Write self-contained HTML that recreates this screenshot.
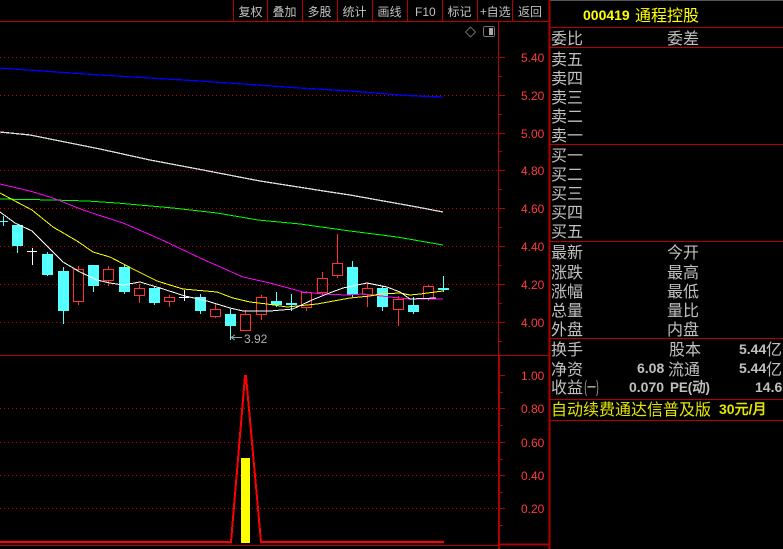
<!DOCTYPE html>
<html><head><meta charset="utf-8"><style>
html,body{margin:0;padding:0;background:#000;width:783px;height:549px;overflow:hidden}
svg{display:block}
text{font-family:"WenQuanYi Zen Hei","Noto Sans CJK SC","Liberation Sans",sans-serif;font-size:16px;fill:#c0c0c0}
.t{font-size:12px;fill:#c0c0c0}
.a{font-family:"Liberation Sans",sans-serif;font-size:12px;fill:#ff3c3c}
.b{font-family:"Liberation Sans","WenQuanYi Zen Hei",sans-serif;font-weight:bold;font-size:14px}
.y{fill:#e6e600}
</style></head><body>
<svg width="783" height="549" viewBox="0 0 783 549" xmlns="http://www.w3.org/2000/svg">
<rect width="783" height="549" fill="#000"/>
<rect x="549" y="0" width="234" height="1" fill="#555"/>
<g shape-rendering="crispEdges" fill="none">
<!-- grid -->
<path d="M0 57.5H498M0 95.5H498M0 133.5H498M0 170.5H498M0 208.5H498M0 246.5H498M0 284.5H498M0 322.5H498M0 408.5H498M0 442.5H498M0 475.5H498M0 508.5H498" stroke="#c80000" stroke-dasharray="1 3"/>
<!-- frame -->
<path d="M0 21.5H549M0 355.5H549M0 545.5H498M549 27.5H783M549 47.5H783M549 144.5H783M549 241.5H783M549 338.5H783M549 399.5H783M549 420.5H783M233.5 0V21M267.5 0V21M302.5 0V21M337.5 0V21M372.5 0V21M407.5 0V21M442.5 0V21M477.5 0V21M512.5 0V21M498.5 21V355" stroke="#b80000"/>
<path d="M499 355V549M498 544.5H549M549.5 0V549" stroke="#ae0000" stroke-width="2"/>
<path d="M499 57.5h6M499 76.5h3M499 95.5h6M499 114.5h3M499 133.5h6M499 151.5h3M499 170.5h6M499 189.5h3M499 208.5h6M499 227.5h3M499 246.5h6M499 265.5h3M499 284.5h6M499 303.5h3M499 322.5h6M499 341.5h3M500 375.5h5M500 392.5h3M500 408.5h5M500 425.5h3M500 442.5h5M500 459.5h3M500 475.5h5M500 492.5h3M500 508.5h5M500 525.5h3" stroke="#b80000"/>
<!-- cyan candles -->
<path d="M17.5 246V253M47.5 252V276M63.5 267V324M93.5 265V292M124.5 264V294M154.5 287V305M200.5 294V314M230.5 309V340M276.5 292V307M291.5 294V311M352.5 261V297M382.5 286V311M413.5 297V314M443.5 276V292M0 221.5H8M3.5 216V226" stroke="#54ffff"/>
<path d="M12 225h11v21h-11zM42 254h11v21h-11zM58 271h11v40h-11zM88 265h11v21h-11zM119 267h11v25h-11zM149 288h11v15h-11zM195 297h11v14h-11zM225 314h11v12h-11zM271 301h11v4h-11zM286 303h11v2h-11zM347 267h11v28h-11zM377 288h11v19h-11zM408 305h11v7h-11zM438 288h11v2h-11z" fill="#54ffff"/>
<!-- white crosses -->
<path d="M27 251.5H37M32.5 248V265M179 297.5H189M184.5 290V301" stroke="#fff"/>
<!-- red candles -->
<path d="M78.5 266V269M78.5 302V305M108.5 266V269M108.5 281V286M139.5 284V288M139.5 296V303M169.5 295V297M169.5 302V307M215.5 304V309M215.5 317V318M245.5 310V314M261.5 295V297M261.5 315V320M306.5 291V292M306.5 308V311M322.5 272V278M322.5 293V295M337.5 234V263M337.5 276V278M367.5 283V288M367.5 295V307M398.5 296V299M398.5 310V326M428.5 285V286M428.5 299V301" stroke="#ff3232"/>
<path d="M73.5 269.5h10v32h-10zM103.5 269.5h10v11h-10zM134.5 288.5h10v7h-10zM164.5 297.5h10v4h-10zM210.5 309.5h10v7h-10zM240.5 314.5h10v16h-10zM256.5 297.5h10v17h-10zM301.5 292.5h10v15h-10zM317.5 278.5h10v14h-10zM332.5 263.5h10v12h-10zM362.5 288.5h10v6h-10zM393.5 299.5h10v10h-10zM423.5 286.5h10v12h-10z" stroke="#ff3232" stroke-width="1"/>
<!-- MAs -->
<polyline stroke="#0000ff" stroke-width="1.3" points="0,68 100,75 200,81 300,88 350,91 400,95 417,96 443,97"/>
<polyline stroke="#dcdcdc" stroke-width="1.3" points="0,132 30,135 60,141 100,149 150,160 203,170 260,181 330,192 350,195 417,207 443,212"/>
<polyline stroke="#00ff00" points="0,199 53,200 87,201 117,203 173,208 217,213 258,220 300,224 350,231 397,237 443,245"/>
<polyline stroke="#ff00ff" points="0,184 30,191 53,198 83,210 123,223 160,239 200,258 243,277 270,283 303,292 323,294 347,295 363,294 390,297 410,299 443,299"/>
<polyline stroke="#ffff00" points="0,193 13,200 32,210 53,227 77,241 93,252 110,257 133,269 157,281 183,289 217,292 233,298 250,302 267,304 287,307 317,304 350,298 370,296 380,294 400,293 410,295 420,294 443,291"/>
<polyline stroke="#ffffff" points="0,212 15,223 32,231 43,242 63,262 80,272 97,280 110,283 123,285 140,282 160,288 185,296 207,301 230,308 243,311 270,311 293,309 312,300 327,294 343,288 367,283 387,287 400,292 410,299 436,298"/>
<!-- lower -->
<rect x="241" y="458" width="9" height="85" fill="#ffff00" stroke="none"/>
<polyline stroke="#ff0000" stroke-width="2" points="0,542 231,542 245,376 246,376 261,542 444,542"/>
<!-- low marker -->
<path d="M231 337.5H242M231 337.5L235 335M231 337.5L235 340" stroke="#a0a0a0"/>
<!-- icons -->
<path d="M470.5 27L475.5 32L470.5 37L465.5 32Z" stroke="#666"/>
<rect x="483.5" y="26.5" width="11" height="10" rx="2" stroke="#777"/>
<rect x="489" y="28" width="4" height="7" fill="#aaa"/>
</g>
<text class="a" x="244" y="343" style="fill:#b0b0b0">3.92</text>
<!-- toolbar -->
<text class="t" x="238.5" y="16">复权</text><text class="t" x="272.5" y="16">叠加</text><text class="t" x="307.5" y="16">多股</text><text class="t" x="342.5" y="16">统计</text><text class="t" x="377.5" y="16">画线</text>
<text class="t" x="415" y="16" style="font-family:'Liberation Sans',sans-serif">F10</text>
<text class="t" x="447.5" y="16">标记</text><text class="t" x="480" y="16">+自选</text><text class="t" x="518" y="16">返回</text>
<!-- axis -->
<text class="a" x="521" y="62">5.40</text><text class="a" x="521" y="100">5.20</text><text class="a" x="521" y="138">5.00</text><text class="a" x="521" y="175">4.80</text><text class="a" x="521" y="213">4.60</text><text class="a" x="521" y="251">4.40</text><text class="a" x="521" y="289">4.20</text><text class="a" x="521" y="327">4.00</text>
<text class="a" x="521" y="380">1.00</text><text class="a" x="521" y="413">0.80</text><text class="a" x="521" y="447">0.60</text><text class="a" x="521" y="480">0.40</text><text class="a" x="521" y="513">0.20</text>
<!-- panel -->
<text class="b" x="583" y="20" style="fill:#ffff00">000419</text>
<text x="635" y="21" style="fill:#ffff00">通程控股</text>
<text x="551" y="44">委比</text><text x="667" y="44">委差</text>
<text x="551" y="65">卖五</text><text x="551" y="84">卖四</text><text x="551" y="103">卖三</text><text x="551" y="122">卖二</text><text x="551" y="141">卖一</text>
<text x="551" y="161">买一</text><text x="551" y="180">买二</text><text x="551" y="199">买三</text><text x="551" y="218">买四</text><text x="551" y="237">买五</text>
<text x="551" y="258">最新</text><text x="667" y="258">今开</text>
<text x="551" y="278">涨跌</text><text x="667" y="278">最高</text>
<text x="551" y="297">涨幅</text><text x="667" y="297">最低</text>
<text x="551" y="316">总量</text><text x="667" y="316">量比</text>
<text x="551" y="335">外盘</text><text x="667" y="335">内盘</text>
<text x="551" y="355">换手</text><text x="669" y="355">股本</text>
<text class="b" x="739" y="354">5.44</text><text x="766" y="355">亿</text>
<text x="551" y="375">净资</text><text class="b" x="637" y="373">6.08</text><text x="668" y="375">流通</text>
<text class="b" x="739" y="373">5.44</text><text x="766" y="375">亿</text>
<text x="551" y="393">收益</text><text x="584" y="393" textLength="15" lengthAdjust="spacingAndGlyphs">(一)</text><text class="b" x="629" y="392">0.070</text><text class="b" x="670" y="392" textLength="40" lengthAdjust="spacingAndGlyphs">PE(动)</text><text class="b" x="755" y="392">14.6</text>
<text class="y" x="551" y="415">自动续费通达信普及版</text><text class="b y" x="719" y="414">30元/月</text>
</svg>
</body></html>
